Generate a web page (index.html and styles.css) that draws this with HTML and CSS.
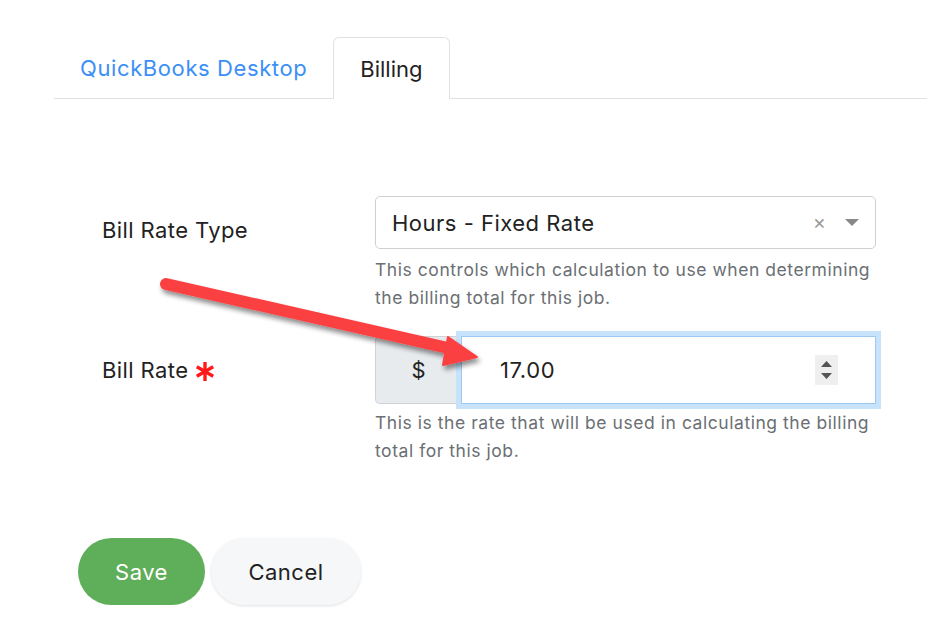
FILE: index.html
```html
<!DOCTYPE html>
<html>
<head>
<meta charset="utf-8">
<link rel="stylesheet" href="styles.css">
</head>
<body>
<div class="page">
  <div class="tabs">
    <div class="tab">QuickBooks Desktop</div>
    <div class="tab active">Billing</div>
  </div>
  <div class="form">
    <div class="row">
      <div class="label label-select">Bill Rate Type</div>
      <div class="control">
        <div class="select">
          <span class="select-value">Hours - Fixed Rate</span>
          <span class="select-clear">×</span>
          <span class="select-caret"></span>
        </div>
        <div class="help help-first">This controls which calculation to use when determining the billing total for this job.</div>
      </div>
    </div>
    <div class="row">
      <div class="label label-input">Bill Rate
        <svg class="req" width="20" height="21" viewBox="0 0 20 21"><g stroke="#ff1a1a" stroke-width="3.4" stroke-linecap="butt"><line x1="10" y1="1" x2="10" y2="20"/><line x1="1.8" y1="5.75" x2="18.2" y2="15.25"/><line x1="1.8" y1="15.25" x2="18.2" y2="5.75"/></g></svg>
      </div>
      <div class="control">
        <div class="input-group">
          <div class="addon">$</div>
          <div class="input">
            <span class="input-value">17.00</span>
            <span class="spinner">
              <svg width="23" height="30" viewBox="0 0 23 30"><path d="M11.5 6 L17 12 L6 12 Z" fill="#555"/><path d="M6 18 L17 18 L11.5 24 Z" fill="#555"/></svg>
            </span>
          </div>
        </div>
        <div class="help help-second">This is the rate that will be used in calculating the billing total for this job.</div>
      </div>
    </div>
  </div>
  <div class="actions">
    <button class="btn btn-save">Save</button>
    <button class="btn btn-cancel">Cancel</button>
  </div>
</div>
<svg class="arrow" width="927" height="644" viewBox="0 0 927 644">
  <defs>
    <filter id="sh" x="-10%" y="-30%" width="120%" height="160%">
      <feGaussianBlur in="SourceAlpha" stdDeviation="2.5"/>
      <feOffset dx="2" dy="4" result="b"/>
      <feComponentTransfer><feFuncA type="linear" slope="0.45"/></feComponentTransfer>
      <feMerge><feMergeNode/><feMergeNode in="SourceGraphic"/></feMerge>
    </filter>
  </defs>
  <g filter="url(#sh)">
    <line x1="166" y1="284" x2="448" y2="348" stroke="#fb4143" stroke-width="12" stroke-linecap="round"/>
    <path d="M448 337 L477 357 L443 365 Z" fill="#fb4143" stroke="#fb4143" stroke-width="2" stroke-linejoin="round"/>
  </g>
</svg>
</body>
</html>
```
FILE: styles.css
```css
html, body {
  margin: 0;
  padding: 0;
  background: #ffffff;
}
body {
  font-family: "Inter", "Roboto", sans-serif;
  color: #212529;
  width: 927px;
  height: 644px;
  overflow: hidden;
  position: relative;
}
.page {
  padding: 37px 0 0 54px;
}
.tabs {
  display: flex;
  border-bottom: 1px solid #e2e2e2;
  height: 61px;
}
.tab {
  padding: 0 26px;
  height: 61px;
  display: flex;
  align-items: center;
  font-size: 22px;
  letter-spacing: 0.6px;
  color: #3b8ff6;
  box-sizing: border-box;
}
.tab.active {
  color: #222;
  background: #fff;
  border: 1px solid #e2e2e2;
  border-bottom: none;
  border-radius: 6px 6px 0 0;
  height: 62px;
  padding: 0 26px;
  letter-spacing: 0;
}
.form {
  padding: 97px 0 0 48px;
  display: flex;
  flex-direction: column;
  gap: 24px;
}
.row {
  display: grid;
  grid-template-columns: 273px 501px;
}
.label {
  font-size: 22px;
  letter-spacing: 0.4px;
  color: #222;
  display: flex;
  align-items: center;
  gap: 7px;
}
.label-select {
  height: 53px;
  padding-top: 14px;
  box-sizing: border-box;
}
.label-input { height: 68px; }
.req { margin-top: 2px; }
.select {
  height: 53px;
  box-sizing: border-box;
  border: 1px solid #cfcfcf;
  border-radius: 5px;
  display: flex;
  align-items: center;
  padding: 0 16px 0 16px;
}
.select-value {
  flex: 1;
  font-size: 22px;
  letter-spacing: 0.5px;
  color: #222;
}
.select-clear {
  color: #999;
  font-size: 20px;
  margin-right: 19px;
  margin-top: -1px;
}
.select-caret {
  width: 0;
  height: 0;
  border-left: 7px solid transparent;
  border-right: 7px solid transparent;
  border-top: 7px solid #888;
}
.help {
  font-size: 17.5px;
  letter-spacing: 0.55px;
  line-height: 28px;
  color: #6b6f74;
}
.help-first { margin-top: 7px; }
.help-second { margin-top: 5px; }
.input-group {
  display: flex;
  height: 68px;
}
.addon {
  width: 86px;
  box-sizing: border-box;
  background: #e8ebee;
  border: 1px solid #cfd3d7;
  border-right: none;
  border-radius: 5px 0 0 5px;
  display: flex;
  align-items: center;
  justify-content: center;
  font-size: 22px;
  color: #222;
}
.input {
  flex: 1;
  box-sizing: border-box;
  border: 1px solid #9ccaf3;
  box-shadow: 0 0 0 5px #c7e2fb;
  display: flex;
  align-items: center;
  padding: 0 37px 0 38px;
  position: relative;
}
.input-value {
  flex: 1;
  font-size: 22px;
  letter-spacing: 0.6px;
  color: #222;
}
.spinner {
  width: 23px;
  height: 30px;
  background: #efefef;
  display: flex;
}
.actions {
  display: flex;
  gap: 6px;
  padding: 73px 0 0 24px;
}
.btn {
  height: 67px;
  border: none;
  border-radius: 34px;
  font-family: "Inter", "Roboto", sans-serif;
  font-size: 22px;
  letter-spacing: 0.5px;
  padding: 0;
}
.btn-save {
  width: 127px;
  background: #5fae5a;
  color: #fff;
}
.btn-cancel {
  width: 150px;
  background: #f6f7f9;
  color: #222;
  box-shadow: 0 1px 3px rgba(0,0,0,0.12);
}
.arrow {
  position: absolute;
  left: 0;
  top: 0;
  pointer-events: none;
}
```
